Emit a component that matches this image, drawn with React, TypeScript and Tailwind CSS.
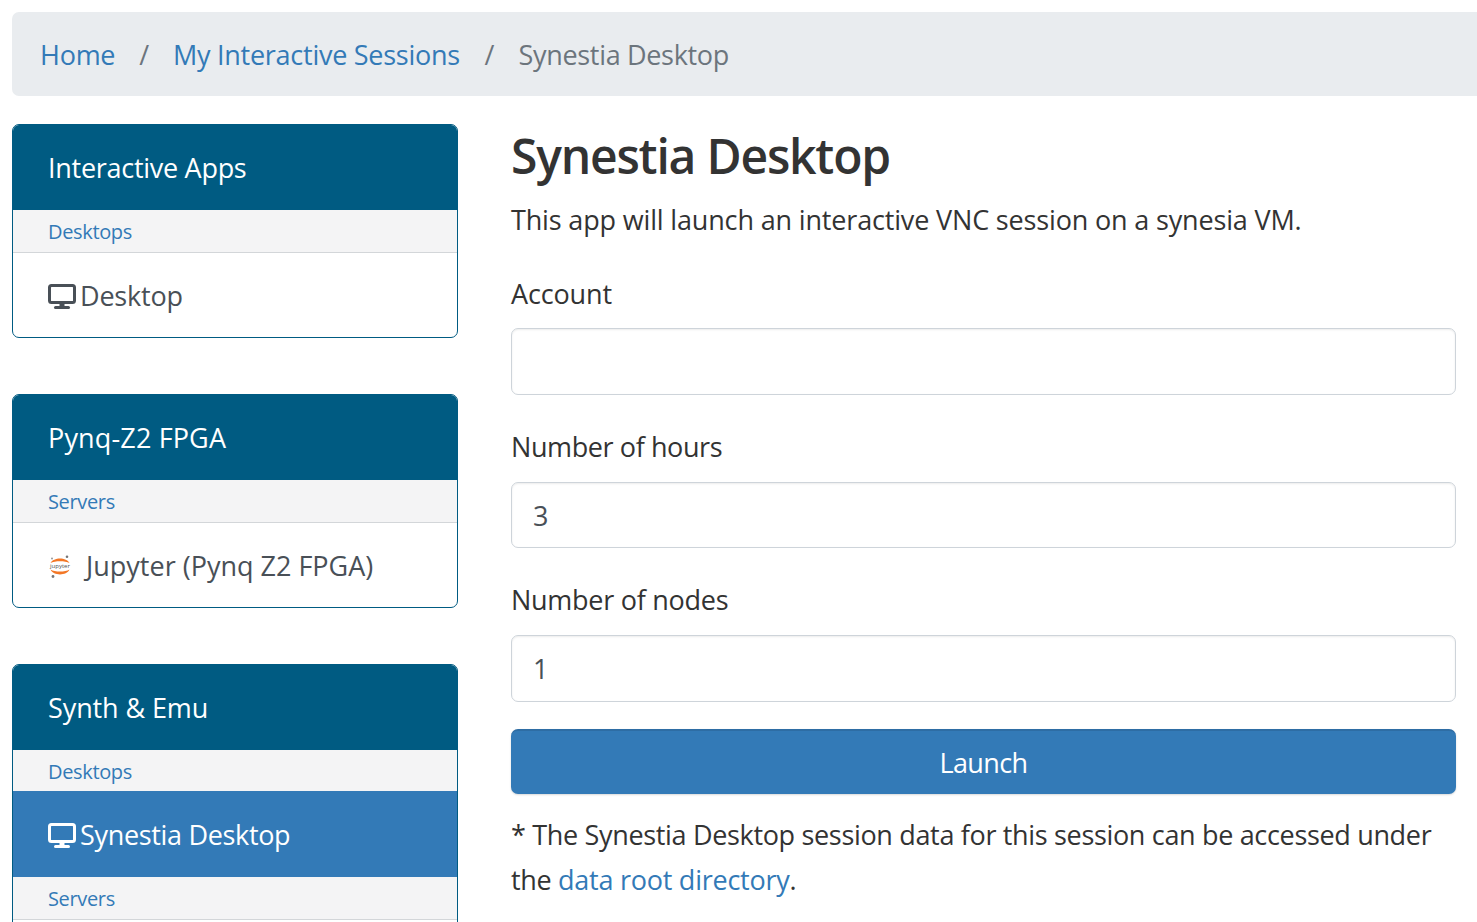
import type { ReactNode } from "react";

const sans = "font-['Open_Sans','Noto_Sans',sans-serif]";

function MonitorIcon({ className }: { className?: string }) {
  return (
    <svg viewBox="0 0 28 25" className={className} fill="none" stroke="currentColor">
      <rect x="1.5" y="1.5" width="25" height="17" rx="2" strokeWidth="3" />
      <path d="M14 19v4" strokeWidth="5" />
      <path d="M7.5 23.5h13" strokeWidth="3" strokeLinecap="round" />
    </svg>
  );
}

function JupyterIcon() {
  return (
    <svg viewBox="0 0 24 26" className="h-[26px] w-[24px] shrink-0">
      <path d="M2.5 10C5.5 4 18.5 4 21.5 10C17 7.6 7 7.6 2.5 10Z" fill="#f37726" />
      <path d="M2.5 16.5C5.5 23 18.5 23 21.5 16.5C17 19.2 7 19.2 2.5 16.5Z" fill="#f37726" />
      <circle cx="19" cy="3.8" r="1.3" fill="#767677" />
      <circle cx="4" cy="5.5" r="1" fill="#989798" />
      <circle cx="5" cy="23.5" r="1.4" fill="#767677" />
      <text x="12" y="14.8" textAnchor="middle" fontSize="6" fill="#4e4e4e" fontFamily="Open Sans, sans-serif">
        jupyter
      </text>
    </svg>
  );
}

function Card({ title, tracking, children, cut }: { title: string; tracking: string; children: ReactNode; cut?: boolean }) {
  return (
    <div className={`w-[446px] rounded-[7px] border border-[#005b82] ${cut ? "" : "mb-[56px]"} overflow-hidden`}>
      <div className={`flex h-[85px] items-center bg-[#005b82] pt-[2px] pl-[35px] text-[27px] text-white ${tracking}`}>
        {title}
      </div>
      {children}
    </div>
  );
}

function SectionHead({ label, border }: { label: string; border?: boolean }) {
  return (
    <div
      className={`flex items-center bg-[#f4f4f5] pl-[35px] pt-[2px] text-[20px] tracking-[-0.35px] text-[#337ab7] ${
        border ? "h-[43px] border-b border-[#d3d6d9]" : "h-[41px]"
      }`}
    >
      {label}
    </div>
  );
}

function Field({ label, value, labelClass }: { label: string; value?: string; labelClass: string }) {
  return (
    <div className="mb-[29px]">
      <div className={`h-[45px] text-[27px] leading-[45px] text-[#333] ${labelClass}`}>{label}</div>
      <div className="flex h-[66.5px] items-center rounded-[7px] border border-[#ced4da] pl-[21px] pt-[2px] text-[27px] text-[#495057] shadow-[inset_0_1px_2px_rgba(0,0,0,0.08)]">
        {value}
      </div>
    </div>
  );
}

export default function App() {
  return (
    <div className={`h-[922px] w-[1477px] overflow-hidden bg-white pl-3 pt-3 ${sans}`}>
      {/* Breadcrumb */}
      <div className="mb-[28px] flex h-[84px] w-[1480px] items-center rounded-[7px] bg-[#e9ecef] pl-[28px] pt-[2px] text-[27px] tracking-[-0.26px]">
        <span className="text-[#337ab7]">Home</span>
        <span className="mx-[24px] text-[#6c757d]">/</span>
        <span className="text-[#337ab7]">My Interactive Sessions</span>
        <span className="mx-[24.5px] text-[#6c757d]">/</span>
        <span className="tracking-[-0.33px] text-[#6c757d]">Synestia Desktop</span>
      </div>

      <div className="flex gap-[53px]">
        {/* Sidebar */}
        <div className="w-[446px] shrink-0">
          <Card title="Interactive Apps" tracking="tracking-[-0.28px]">
            <SectionHead label="Desktops" border />
            <div className="flex h-[84px] items-center pl-[35px] pt-[2px] text-[27px] tracking-[-0.2px] text-[#495057]">
              <MonitorIcon className="h-[25px] w-[28px] shrink-0 text-[#495057]" />
              <span className="ml-[4px]">Desktop</span>
            </div>
          </Card>
          <Card title="Pynq-Z2 FPGA" tracking="tracking-[0.15px]">
            <SectionHead label="Servers" border />
            <div className="flex h-[84px] items-center pl-[35px] pt-[2px] text-[27px] text-[#495057]">
              <JupyterIcon />
              <span className="ml-[14px]">Jupyter (Pynq Z2 FPGA)</span>
            </div>
          </Card>
          <Card title="Synth & Emu" tracking="tracking-[-0.1px]" cut>
            <SectionHead label="Desktops" />
            <div className="flex h-[86px] items-center bg-[#337ab7] pl-[35px] pt-[2px] text-[27px] tracking-[-0.33px] text-white">
              <MonitorIcon className="h-[25px] w-[28px] shrink-0 text-white" />
              <span className="ml-[4px]">Synestia Desktop</span>
            </div>
            <SectionHead label="Servers" border />
            <div className="h-[84px]" />
          </Card>
        </div>

        {/* Main form */}
        <div className="w-[945px] shrink-0 text-[#333]">
          <h1 className="h-[63px] text-[48px] font-semibold leading-[63px] tracking-[-1.2px]">Synestia Desktop</h1>
          <p className="mb-[29px] mt-[10px] text-[27px] leading-[45px] tracking-[-0.16px]">
            This app will launch an interactive VNC session on a synesia VM.
          </p>
          <Field label="Account" labelClass="mb-[12px] tracking-[-0.15px]" />
          <Field label="Number of hours" labelClass="mb-[13px] tracking-[-0.4px]" value="3" />
          <div className="-mb-[1.5px]">
            <Field label="Number of nodes" labelClass="mb-[13px] tracking-[-0.27px]" value="1" />
          </div>
          <button className="h-[65px] w-full rounded-[7px] border-t-2 border-[#2e6da4] bg-[#337ab7] pt-[1px] text-[27px] tracking-[-0.6px] text-white shadow-[0_1px_2px_rgba(0,0,0,0.15)]">
            Launch
          </button>
          <p className="mt-[18px] text-[27px] leading-[45px] tracking-[-0.33px]">
            * The Synestia Desktop session data for this session can be accessed under the{" "}
            <span className="tracking-[-0.25px] text-[#337ab7]">data root directory</span>.
          </p>
        </div>
      </div>
    </div>
  );
}
